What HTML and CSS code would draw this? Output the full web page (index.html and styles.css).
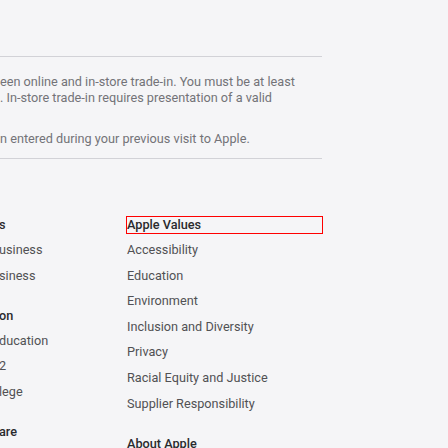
FILE: index.html
```html
<!DOCTYPE html>
<html lang="en">
<head>
<meta charset="utf-8">
<link rel="stylesheet" href="styles.css">
</head>
<body>
<footer class="footer">
  <section class="notes">
    <p class="note">een online and in-store trade-in. You must be at least<br>. In-store trade-in requires presentation of a valid</p>
    <p class="note note-next">n entered during your previous visit to Apple.</p>
  </section>
  <nav class="directory">
    <div class="col col-cut">
      <h3 class="heading">s</h3>
      <ul class="list">
        <li>usiness</li>
        <li>siness</li>
      </ul>
      <h3 class="heading heading-next">on</h3>
      <ul class="list">
        <li>ducation</li>
        <li>2</li>
        <li>lege</li>
      </ul>
      <h3 class="heading heading-next">are</h3>
    </div>
    <div class="col">
      <h3 class="heading heading-focus">Apple Values</h3>
      <ul class="list">
        <li>Accessibility</li>
        <li>Education</li>
        <li>Environment</li>
        <li>Inclusion and Diversity</li>
        <li>Privacy</li>
        <li>Racial Equity and Justice</li>
        <li>Supplier Responsibility</li>
      </ul>
      <h3 class="heading heading-next">About Apple</h3>
    </div>
  </nav>
</footer>
</body>
</html>
```
FILE: styles.css
```css
html, body {
  margin: 0;
  padding: 0;
  background: #f5f5f7;
}
body {
  font-family: Roboto, "Liberation Sans", sans-serif;
  font-size: 12.7px;
  line-height: 16px;
  height: 448px;
  overflow: hidden;
}
.footer {
  width: 322px;
  padding-top: 56px;
}
.notes {
  border-top: 1px solid #d2d2d7;
  border-bottom: 1px solid #d2d2d7;
  padding: 17px 0 11px;
}
.note {
  margin: 0;
  color: #737378;
  white-space: nowrap;
}
.note-next {
  margin-top: 25px;
}
.directory {
  display: grid;
  grid-template-columns: 107px 195px;
  column-gap: 20px;
  margin-top: 58px;
}
.col-cut {
  margin-left: -1px;
  overflow: hidden;
}
.heading {
  margin: 0 0 9px;
  font-size: 12.7px;
  line-height: 16px;
  font-weight: 500;
  color: #2a2a2d;
}
.heading-next {
  margin-top: 24px;
}
.heading-focus {
  outline: 1px solid #ff0000;
}
.list {
  list-style: none;
  margin: 0;
  padding: 0;
}
.list li {
  color: #515154;
  margin-bottom: 9.6px;
}
.list li:last-child {
  margin-bottom: 0;
}
```
